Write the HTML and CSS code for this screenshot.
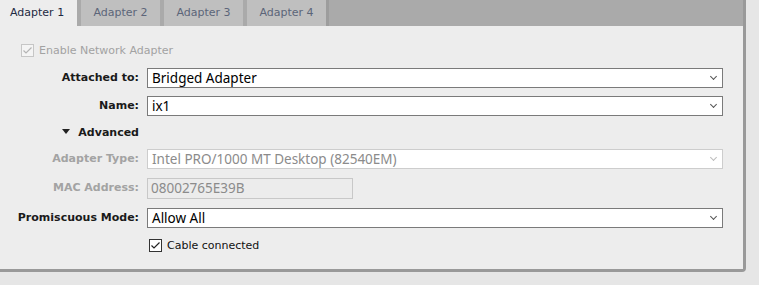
FILE: index.html
```html
<!DOCTYPE html>
<html lang="en-us">
<head>
  <meta charset="utf-8">
  <title>Network</title>
  <link rel="stylesheet" href="styles.css">
</head>
<body>

  <div class="panel">
    <div class="tabs">
      <div class="tab active">Adapter 1</div>
      <div class="tab">Adapter 2</div>
      <div class="tab">Adapter 3</div>
      <div class="tab last">Adapter 4</div>
    </div>

    <div class="body">
      <label class="check disabled">
        <svg class="box" width="13" height="13" viewBox="0 0 13 13">
          <rect x="0.5" y="0.5" width="12" height="12" fill="#f4f4f4" stroke="#c6c6c6"/>
          <path d="M2.5 6.5 L5 9 L10.5 3.5" fill="none" stroke="#b4b4b4" stroke-width="1.2"/>
        </svg>
        Enable Network Adapter
      </label>

      <div class="form">
        <div class="row">
          <span class="label">Attached to:</span>
          <div class="select">Bridged Adapter<i class="chev"></i></div>
        </div>
        <div class="row">
          <span class="label">Name:</span>
          <div class="select">ix1<i class="chev"></i></div>
        </div>
        <div class="row adv">
          <span class="label"><i class="tri"></i>Advanced</span>
        </div>
        <div class="row type">
          <span class="label dim">Adapter Type:</span>
          <div class="select off">Intel PRO/1000 MT Desktop (82540EM)<i class="chev"></i></div>
        </div>
        <div class="row mac">
          <span class="label dim">MAC Address:</span>
          <div class="field">08002765E39B</div>
        </div>
        <div class="row">
          <span class="label">Promiscuous Mode:</span>
          <div class="select">Allow All<i class="chev"></i></div>
        </div>
        <div class="row cable">
          <span class="label"></span>
          <label class="check">
            <svg class="box" width="13" height="13" viewBox="0 0 13 13">
              <rect x="0.5" y="0.5" width="12" height="12" fill="#fff" stroke="#333"/>
              <path d="M2.5 6.5 L5 9 L10.5 3.5" fill="none" stroke="#222" stroke-width="1.2"/>
            </svg>
            Cable connected
          </label>
        </div>
      </div>
    </div>
  </div>

</body>
</html>
```

FILE: styles.css
```css
* {
  box-sizing: border-box;
}
body {
  margin: 0;
  background-color: #e6e6e6;
  font: 11px "DejaVu Sans", Verdana, sans-serif;
  color: #111;
}
.panel {
  width: 746px;
  height: 272px;
  background-color: #ededed;
  border-right: 3px solid #999;
  border-bottom: 3px solid #999;
  border-bottom-right-radius: 4px;
}
.tabs {
  display: flex;
  gap: 4px;
  height: 26px;
  background-color: #aaa;
}
.tab {
  width: 79px;
  height: 26px;
  line-height: 25px;
  text-align: center;
  background-color: #bfbfbf;
  color: #5c6579;
}
.tab.active {
  width: 77px;
  padding-left: 10px;
  text-align: left;
  background-color: #ededed;
  color: #1e2a42;
}
.tab.last {
  border-right: 3px solid #9d9d9d;
  width: 82px;
}
.body {
  padding-top: 17px;
}
.check {
  display: flex;
  align-items: center;
  gap: 5px;
  height: 14px;
  color: #111;
}
.check.disabled {
  margin-left: 21px;
  color: #a2a2a2;
}
.form {
  display: flex;
  flex-direction: column;
  gap: 8px;
  margin-top: 11px;
}
.row {
  display: flex;
  align-items: flex-start;
  gap: 8px;
  height: 20px;
}
.label {
  width: 139px;
  flex: none;
  text-align: right;
  font-weight: bold;
  line-height: 20px;
  color: #1a1a1a;
}
.label.dim {
  color: #a3a3a3;
}
.select, .field {
  position: relative;
  width: 576px;
  height: 20px;
  line-height: 18px;
  padding-left: 4px;
  background-color: #fff;
  border: 1px solid #7a7a7a;
  color: #000;
  font: 13.5px "Noto Sans", sans-serif;
}
.chev {
  position: absolute;
  right: 6px;
  top: 5px;
  width: 5px;
  height: 5px;
  border-right: 1px solid #555;
  border-bottom: 1px solid #555;
  transform: rotate(45deg);
}
.select.off {
  border-color: #cdcdcd;
  color: #8b8b8b;
}
.select.off .chev {
  border-color: #bcbcbc;
}
.adv {
  height: 17px;
}
.adv .label {
  line-height: 17px;
}
.tri {
  display: inline-block;
  width: 0;
  height: 0;
  margin-right: 8px;
  vertical-align: 2px;
  border-left: 4px solid transparent;
  border-right: 4px solid transparent;
  border-top: 5px solid #222;
}
.type {
  height: 21px;
}
.mac {
  height: 22px;
}
.field {
  width: 206px;
  height: 21px;
  line-height: 19px;
  padding-left: 3px;
  background-color: #ececec;
  border-color: #c8c8c8;
  color: #8b8b8b;
}
.cable {
  padding-top: 2px;
}
.cable .label {
  width: 141px;
}
```
